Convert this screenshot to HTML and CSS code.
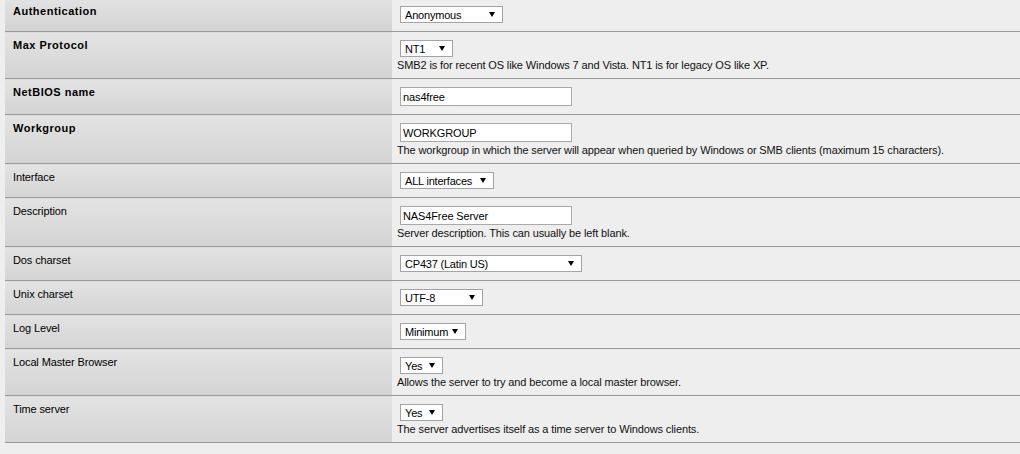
FILE: index.html
```html
<!DOCTYPE html>
<html>
<head>
<meta charset="utf-8">
<link rel="stylesheet" href="styles.css">
</head>
<body>
<div class="page">
<table class="form">
  <tr>
    <td class="label strong">Authentication</td>
    <td class="field"><span class="select w-anon">Anonymous</span></td>
  </tr>
  <tr>
    <td class="label strong">Max Protocol</td>
    <td class="field"><span class="select w-nt1">NT1</span><div class="desc">SMB2 is for recent OS like Windows 7 and Vista. NT1 is for legacy OS like XP.</div></td>
  </tr>
  <tr>
    <td class="label strong">NetBIOS name</td>
    <td class="field"><span class="input">nas4free</span></td>
  </tr>
  <tr>
    <td class="label strong">Workgroup</td>
    <td class="field"><span class="input">WORKGROUP</span><div class="desc">The workgroup in which the server will appear when queried by Windows or SMB clients (maximum 15 characters).</div></td>
  </tr>
  <tr>
    <td class="label">Interface</td>
    <td class="field"><span class="select w-if">ALL interfaces</span></td>
  </tr>
  <tr>
    <td class="label">Description</td>
    <td class="field"><span class="input">NAS4Free Server</span><div class="desc">Server description. This can usually be left blank.</div></td>
  </tr>
  <tr>
    <td class="label">Dos charset</td>
    <td class="field"><span class="select w-cp">CP437 (Latin US)</span></td>
  </tr>
  <tr>
    <td class="label">Unix charset</td>
    <td class="field"><span class="select w-utf">UTF-8</span></td>
  </tr>
  <tr>
    <td class="label">Log Level</td>
    <td class="field"><span class="select w-min">Minimum</span></td>
  </tr>
  <tr>
    <td class="label">Local Master Browser</td>
    <td class="field"><span class="select w-yes">Yes</span><div class="desc">Allows the server to try and become a local master browser.</div></td>
  </tr>
  <tr>
    <td class="label">Time server</td>
    <td class="field"><span class="select w-yes">Yes</span><div class="desc">The server advertises itself as a time server to Windows clients.</div></td>
  </tr>
</table>
</div>
</body>
</html>
```

FILE: styles.css
```css
html, body {
  margin: 0;
  padding: 0;
  background: #eeeeee;
}
body {
  font-family: "Liberation Sans", Arial, sans-serif;
  font-size: 11px;
  color: #000;
  letter-spacing: -0.12px;
}
.page {
  padding-left: 5px;
  margin-top: -2px;
}
.form {
  border-collapse: collapse;
  border-spacing: 0;
  width: 1015px;
}
.form td {
  border-bottom: 1px solid #999999;
  vertical-align: top;
  padding: 0;
}
.label {
  width: 387px;
  box-sizing: border-box;
  background: linear-gradient(#e3e3e3, #d3d3d3);
  padding: 7px 0 0 8px !important;
  line-height: 13px;
  color: #000;
}
.label.strong {
  font-weight: bold;
  letter-spacing: 0.5px;
}
.field {
  background: #eeeeee;
  padding: 8px 6px 8px 5px !important;
}
.select {
  display: block;
  position: relative;
  box-sizing: border-box;
  height: 17px;
  margin-left: 3px;
  padding: 1px 0 0 4px;
  border: 1px solid #a3a3a3;
  background: #ffffff;
  line-height: 14px;
  color: #000;
  letter-spacing: -0.2px;
}
.select::after {
  content: "";
  position: absolute;
  right: 7px;
  top: 5px;
  border-left: 3px solid transparent;
  border-right: 3px solid transparent;
  border-top: 5px solid #000;
}
.w-anon { width: 103px; }
.w-nt1 { width: 53px; }
.w-if { width: 94px; }
.w-cp { width: 182px; }
.w-utf { width: 83px; }
.w-min { width: 66px; }
.w-yes { width: 43px; }
.input {
  display: block;
  box-sizing: border-box;
  width: 172px;
  height: 19px;
  margin-left: 3px;
  padding: 1px 0 0 2px;
  border: 1px solid #a9a9a9;
  background: #ffffff;
  line-height: 16px;
  color: #000;
}
.desc {
  line-height: 13px;
  margin-top: 2px;
  margin-bottom: -2px;
  color: #111;
}
```
